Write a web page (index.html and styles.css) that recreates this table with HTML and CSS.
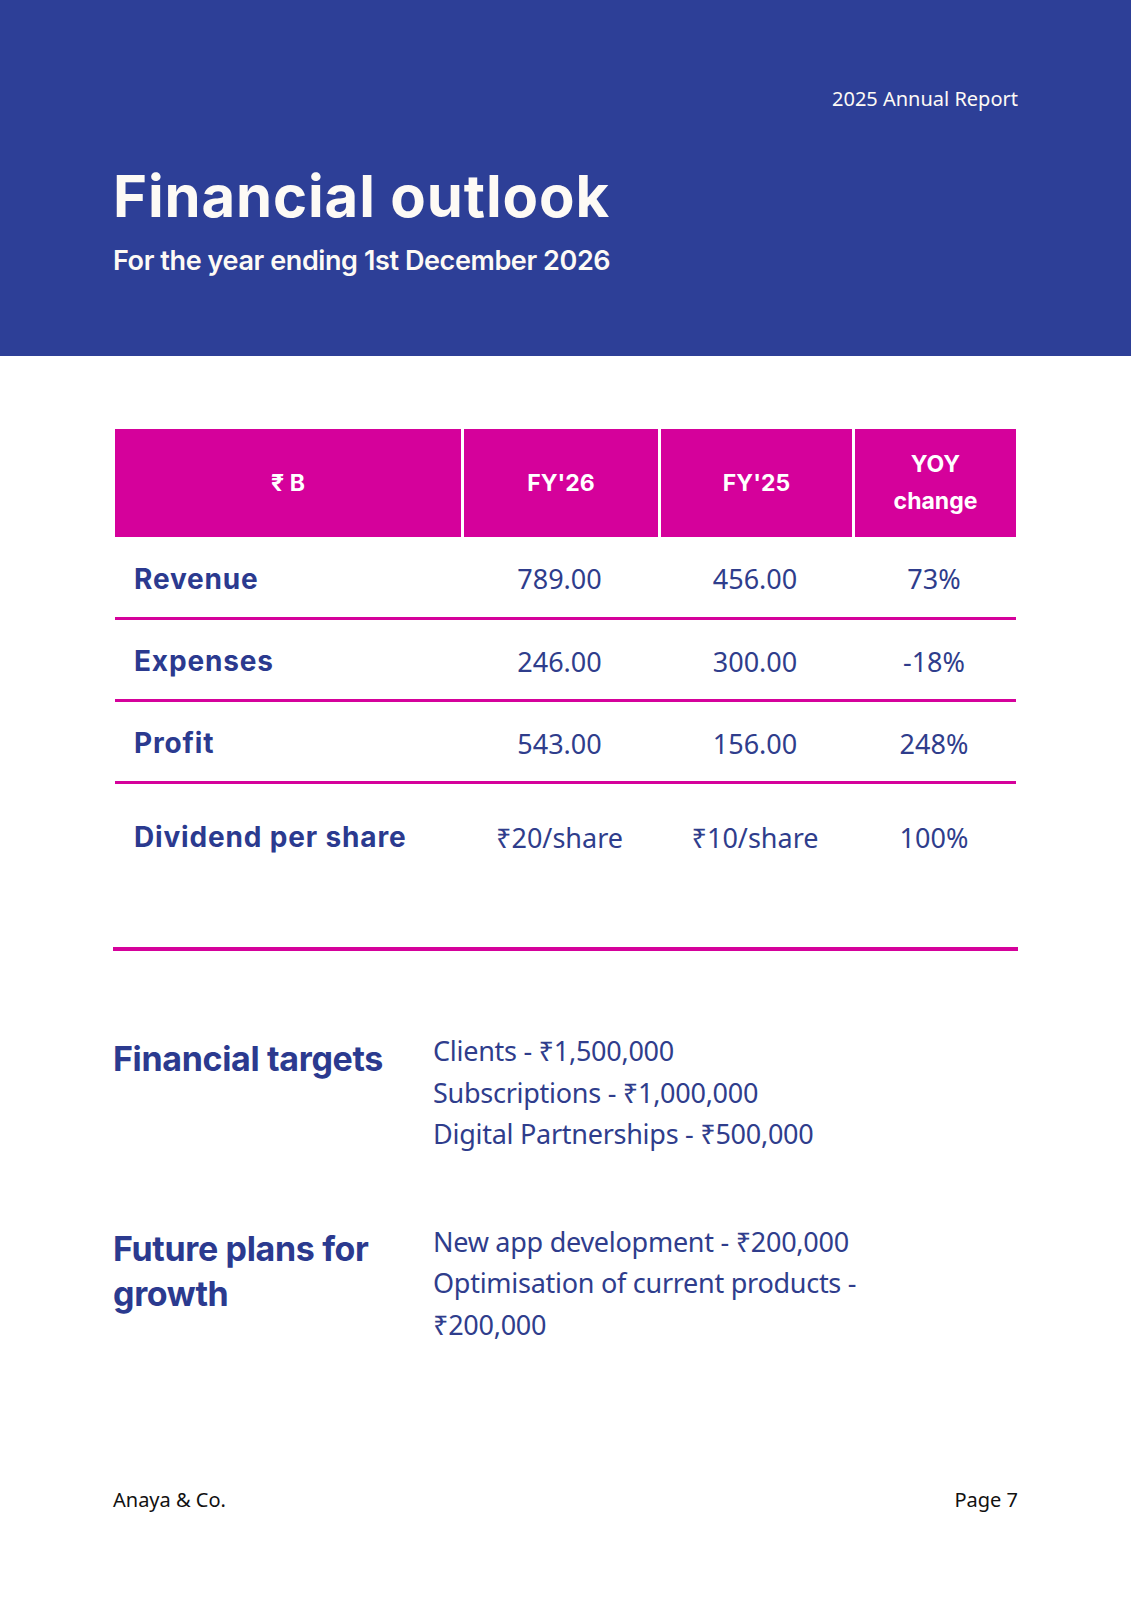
FILE: index.html
```html
<!DOCTYPE html>
<html lang="en">
<head>
<meta charset="utf-8">
<title>Financial outlook</title>
<link rel="stylesheet" href="styles.css">
</head>
<body>
<div class="page">
  <header class="hero">
    <p class="hero-kicker">2025 Annual Report</p>
    <h1 class="hero-title">Financial outlook</h1>
    <p class="hero-sub">For the year ending 1st December 2026</p>
  </header>

  <main class="content">
    <div class="fin-table">
      <div class="fin-row fin-head">
        <div class="cell">₹ B</div>
        <div class="cell">FY'26</div>
        <div class="cell">FY'25</div>
        <div class="cell">YOY<br>change</div>
      </div>
      <div class="fin-row fin-body fin-first">
        <div class="cell label">Revenue</div>
        <div class="cell">789.00</div>
        <div class="cell">456.00</div>
        <div class="cell">73%</div>
      </div>
      <div class="fin-row fin-body">
        <div class="cell label">Expenses</div>
        <div class="cell">246.00</div>
        <div class="cell">300.00</div>
        <div class="cell">-18%</div>
      </div>
      <div class="fin-row fin-body">
        <div class="cell label">Profit</div>
        <div class="cell">543.00</div>
        <div class="cell">156.00</div>
        <div class="cell">248%</div>
      </div>
      <div class="fin-row fin-body fin-last">
        <div class="cell label">Dividend per share</div>
        <div class="cell">₹20/share</div>
        <div class="cell">₹10/share</div>
        <div class="cell">100%</div>
      </div>
    </div>

    <hr class="divider">

    <section class="plan">
      <h2 class="plan-title">Financial targets</h2>
      <ul class="plan-list">
        <li>Clients - ₹1,500,000</li>
        <li>Subscriptions - ₹1,000,000</li>
        <li>Digital Partnerships - ₹500,000</li>
      </ul>
    </section>

    <section class="plan plan-next">
      <h2 class="plan-title">Future plans for growth</h2>
      <ul class="plan-list">
        <li>New app development - ₹200,000</li>
        <li>Optimisation of current products - ₹200,000</li>
      </ul>
    </section>
  </main>

  <footer class="footer">
    <span>Anaya &amp; Co.</span>
    <span>Page 7</span>
  </footer>
</div>
</body>
</html>
```

FILE: styles.css
```css
html, body {
  margin: 0;
  padding: 0;
  background: #ffffff;
}

body {
  font-family: "Noto Sans", "DejaVu Sans", sans-serif;
  color: #2e3c8c;
}

.page {
  width: 1131px;
  min-height: 1600px;
  display: flex;
  flex-direction: column;
}

/* ---------- Header band ---------- */
.hero {
  background: #2d3f97;
  height: 356px;
  box-sizing: border-box;
  padding: 87px 113px 0;
  color: #fdfaf5;
}

.hero-kicker {
  margin: 0;
  text-align: right;
  font-family: "Noto Sans", sans-serif;
  font-size: 20px;
  line-height: 24px;
}

.hero-title {
  margin: 50px 0 0;
  font-family: "Inter", "Noto Sans", sans-serif;
  font-weight: 700;
  font-size: 58px;
  line-height: 70px;
  letter-spacing: 0.015em;
}

.hero-sub {
  margin: 13px 0 0;
  font-family: "Inter", "Noto Sans", sans-serif;
  font-weight: 600;
  font-size: 27px;
  line-height: 33px;
  letter-spacing: -0.015em;
}

/* ---------- Content ---------- */
.content {
  padding: 73px 113px 0;
}

.fin-table {
  margin: 0 2px;
}

.fin-row {
  display: grid;
  grid-template-columns: 346px 197px 194px 164px;
}

.cell {
  display: flex;
  align-items: center;
  justify-content: center;
  text-align: center;
}

.fin-head {
  height: 108px;
}

.fin-head .cell {
  background: #d5019b;
  color: #ffffff;
  font-family: "Inter", "Noto Sans", sans-serif;
  font-weight: 700;
  font-size: 23px;
  line-height: 37px;
}

.fin-head .cell + .cell {
  border-left: 3px solid #ffffff;
}

.fin-body {
  height: 82px;
  box-sizing: border-box;
  padding-top: 3px;
  border-bottom: 3px solid #d5019b;
  font-family: "Noto Sans", sans-serif;
  font-size: 27px;
  color: #2f3d8c;
}

.fin-body.fin-first {
  height: 83px;
}

.fin-body .label {
  justify-content: flex-start;
  padding-left: 19px;
  font-family: "Inter", "Noto Sans", sans-serif;
  font-weight: 700;
  font-size: 28px;
  letter-spacing: 0.03em;
  color: #2b3a8f;
}

.fin-body.fin-last {
  height: 106px;
  padding-top: 0;
  border-bottom: 0;
}

.divider {
  margin: 57px 0 0;
  border: 0;
  height: 4px;
  background: #d5019b;
}

.plan {
  display: grid;
  grid-template-columns: 320px 1fr;
  margin-top: 79px;
}

.plan.plan-next {
  margin-top: 66px;
}

.plan-title {
  margin: 6px 0 0;
  font-family: "Inter", "Noto Sans", sans-serif;
  font-weight: 700;
  font-size: 34px;
  line-height: 45px;
  letter-spacing: -0.01em;
  color: #2b3a8f;
}

.plan-next .plan-title {
  margin-top: 5px;
}

.plan-list {
  list-style: none;
  margin: 0;
  padding: 0;
  max-width: 470px;
  font-family: "Noto Sans", sans-serif;
  font-size: 27px;
  line-height: 41.5px;
  letter-spacing: -0.01em;
  color: #2f3d8c;
}

/* ---------- Footer ---------- */
.footer {
  margin-top: auto;
  padding: 0 113px 88px;
  display: flex;
  justify-content: space-between;
  font-family: "Noto Sans", sans-serif;
  font-size: 20px;
  line-height: 24px;
  color: #111111;
}
```
